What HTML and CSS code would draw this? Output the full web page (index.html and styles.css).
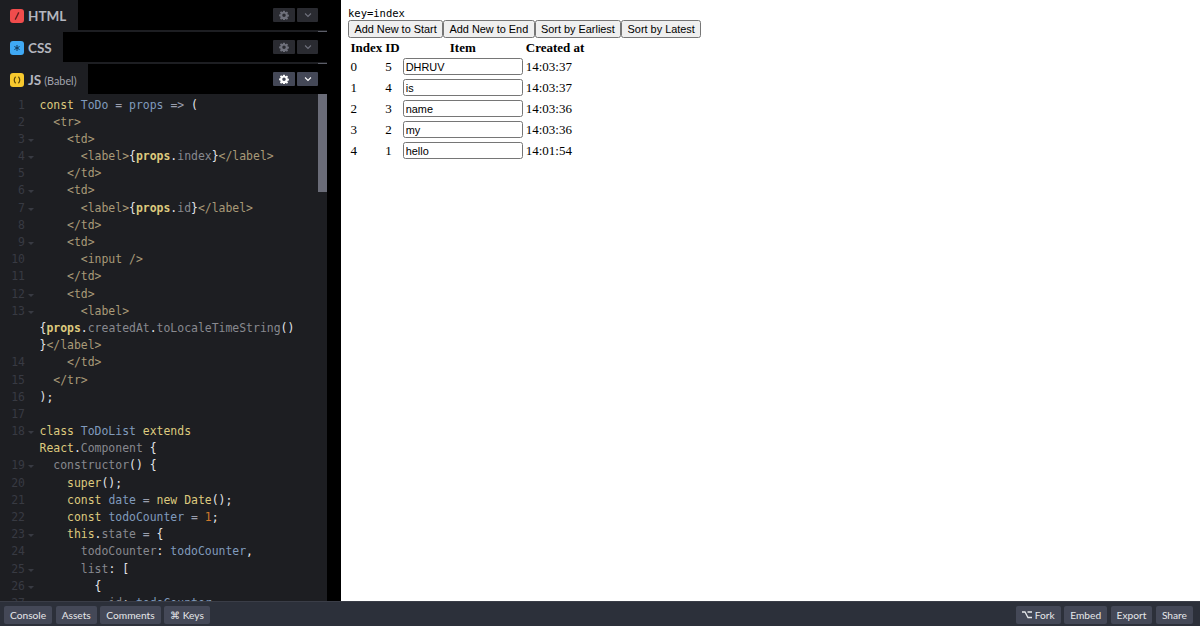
FILE: index.html
```html
<!DOCTYPE html>
<html lang="en">
<head>
<meta charset="utf-8">
<title>key=index</title>
<link rel="stylesheet" href="styles.css">
</head>
<body>
<div class="app">
  <main class="main">
    <section class="editors">
      <header class="bar">
        <div class="tab">
          <svg class="logo" viewBox="0 0 14 14"><rect width="14" height="14" rx="3" fill="#f04c4c"/><path d="M8.800 3.400 5.200 10.600" stroke="#5c1d1d" stroke-width="1.300"/></svg>
          <span>HTML</span>
        </div>
        <div class="tools dim">
          <button class="tool gear"><svg viewBox="0 0 12 12"><use href="#gear"/></svg></button>
          <button class="tool chev"><svg viewBox="0 0 12 12"><path d="M2.500 4.200 6 7.600l3.500-3.400" fill="none" stroke="currentColor" stroke-width="1.400"/></svg></button>
        </div>
      </header>
      <header class="bar">
        <div class="tab">
          <svg class="logo" viewBox="0 0 14 14"><rect width="14" height="14" rx="3" fill="#3fa9f5"/><path d="M7 4v6M4.400 5.500l5.200 3M9.600 5.500l-5.200 3" stroke="#123a5c" stroke-width="1"/></svg>
          <span>CSS</span>
        </div>
        <div class="tools dim">
          <button class="tool gear"><svg viewBox="0 0 12 12"><use href="#gear"/></svg></button>
          <button class="tool chev"><svg viewBox="0 0 12 12"><path d="M2.500 4.200 6 7.600l3.500-3.4" fill="none" stroke="currentColor" stroke-width="1.400"/></svg></button>
        </div>
      </header>
      <header class="bar last">
        <div class="tab">
          <svg class="logo" viewBox="0 0 14 14"><rect width="14" height="14" rx="3" fill="#f7c92e"/><path d="M5.600 3.800C3.800 5.500 3.800 8.500 5.600 10.200M8.400 3.800c1.800 1.700 1.800 4.700 0 6.400" fill="none" stroke="#5b4708" stroke-width="1.200"/></svg>
          <span>JS</span><small>(Babel)</small>
        </div>
        <div class="tools">
          <button class="tool gear"><svg viewBox="0 0 12 12"><use href="#gear"/></svg></button>
          <button class="tool chev"><svg viewBox="0 0 12 12"><path d="M2.500 4.200 6 7.600l3.500-3.4" fill="none" stroke="currentColor" stroke-width="1.400"/></svg></button>
        </div>
      </header>
      <div class="code">
        <div class="lines">
          <div class="ln"><i>1</i><b></b><code><s class="k">const</s> <s class="v">ToDo</s> <s class="o">=</s> <s class="v">props</s> <s class="o">=&gt;</s> <s class="p">(</s></code></div>
          <div class="ln"><i>2</i><b></b><code>  <s class="t">&lt;tr&gt;</s></code></div>
          <div class="ln"><i>3</i><b class="f"></b><code>    <s class="t">&lt;td&gt;</s></code></div>
          <div class="ln"><i>4</i><b class="f"></b><code>      <s class="t">&lt;label&gt;</s><s class="w">{</s><s class="k">props</s><s class="w">.</s><s class="n">index</s><s class="w">}</s><s class="t">&lt;/label&gt;</s></code></div>
          <div class="ln"><i>5</i><b></b><code>    <s class="t">&lt;/td&gt;</s></code></div>
          <div class="ln"><i>6</i><b class="f"></b><code>    <s class="t">&lt;td&gt;</s></code></div>
          <div class="ln"><i>7</i><b class="f"></b><code>      <s class="t">&lt;label&gt;</s><s class="w">{</s><s class="k">props</s><s class="w">.</s><s class="n">id</s><s class="w">}</s><s class="t">&lt;/label&gt;</s></code></div>
          <div class="ln"><i>8</i><b></b><code>    <s class="t">&lt;/td&gt;</s></code></div>
          <div class="ln"><i>9</i><b class="f"></b><code>    <s class="t">&lt;td&gt;</s></code></div>
          <div class="ln"><i>10</i><b></b><code>      <s class="t">&lt;input /&gt;</s></code></div>
          <div class="ln"><i>11</i><b></b><code>    <s class="t">&lt;/td&gt;</s></code></div>
          <div class="ln"><i>12</i><b class="f"></b><code>    <s class="t">&lt;td&gt;</s></code></div>
          <div class="ln"><i>13</i><b class="f"></b><code>      <s class="t">&lt;label&gt;</s></code></div>
          <div class="ln"><i></i><b></b><code><s class="w">{</s><s class="k">props</s><s class="w">.</s><s class="n">createdAt</s><s class="w">.</s><s class="n">toLocaleTimeString</s><s class="w">()</s></code></div>
          <div class="ln"><i></i><b></b><code><s class="w">}</s><s class="t">&lt;/label&gt;</s></code></div>
          <div class="ln"><i>14</i><b></b><code>    <s class="t">&lt;/td&gt;</s></code></div>
          <div class="ln"><i>15</i><b></b><code>  <s class="t">&lt;/tr&gt;</s></code></div>
          <div class="ln"><i>16</i><b></b><code><s class="w">);</s></code></div>
          <div class="ln"><i>17</i><b></b><code></code></div>
          <div class="ln"><i>18</i><b class="f"></b><code><s class="k">class</s> <s class="v">ToDoList</s> <s class="k">extends</s></code></div>
          <div class="ln"><i></i><b></b><code><s class="k">React</s><s class="w">.</s><s class="n">Component</s> <s class="w">{</s></code></div>
          <div class="ln"><i>19</i><b class="f"></b><code>  <s class="n">constructor</s><s class="w">()</s> <s class="w">{</s></code></div>
          <div class="ln"><i>20</i><b></b><code>    <s class="k">super</s><s class="w">();</s></code></div>
          <div class="ln"><i>21</i><b></b><code>    <s class="k">const</s> <s class="v">date</s> <s class="o">=</s> <s class="k">new</s> <s class="k">Date</s><s class="w">();</s></code></div>
          <div class="ln"><i>22</i><b></b><code>    <s class="k">const</s> <s class="v">todoCounter</s> <s class="o">=</s> <s class="d">1</s><s class="w">;</s></code></div>
          <div class="ln"><i>23</i><b class="f"></b><code>    <s class="k">this</s><s class="w">.</s><s class="n">state</s> <s class="o">=</s> <s class="w">{</s></code></div>
          <div class="ln"><i>24</i><b></b><code>      <s class="n">todoCounter</s><s class="w">:</s> <s class="v">todoCounter</s><s class="w">,</s></code></div>
          <div class="ln"><i>25</i><b class="f"></b><code>      <s class="n">list</s><s class="w">:</s> <s class="w">[</s></code></div>
          <div class="ln"><i>26</i><b class="f"></b><code>        <s class="w">{</s></code></div>
          <div class="ln"><i>27</i><b></b><code>          <s class="n">id</s><s class="w">:</s> <s class="v">todoCounter</s><s class="w">,</s></code></div>
        </div>
        <div class="thumb"></div>
      </div>
    </section>
    <div class="divider"></div>
    <section class="preview">
      <code class="key">key=index</code>
      <div class="actions">
        <button class="btn">Add New to Start</button><button class="btn">Add New to End</button><button class="btn">Sort by Earliest</button><button class="btn">Sort by Latest</button>
      </div>
      <table class="list">
        <thead><tr><th>Index</th><th>ID</th><th>Item</th><th>Created at</th></tr></thead>
        <tbody>
          <tr><td>0</td><td>5</td><td><input class="field" value="DHRUV"></td><td>14:03:37</td></tr>
          <tr><td>1</td><td>4</td><td><input class="field" value="is"></td><td>14:03:37</td></tr>
          <tr><td>2</td><td>3</td><td><input class="field" value="name"></td><td>14:03:36</td></tr>
          <tr><td>3</td><td>2</td><td><input class="field" value="my"></td><td>14:03:36</td></tr>
          <tr><td>4</td><td>1</td><td><input class="field" value="hello"></td><td>14:01:54</td></tr>
        </tbody>
      </table>
    </section>
  </main>
  <footer class="foot">
    <nav class="group">
      <button class="fbtn">Console</button>
      <button class="fbtn">Assets</button>
      <button class="fbtn">Comments</button>
      <button class="fbtn">⌘ Keys</button>
    </nav>
    <nav class="group">
      <button class="fbtn"><svg class="fork" viewBox="0 0 10 8"><path d="M0 1h3l3 5.500h4M5.500 1H10" fill="none" stroke="currentColor" stroke-width="1.300"/></svg>Fork</button>
      <button class="fbtn">Embed</button>
      <button class="fbtn">Export</button>
      <button class="fbtn">Share</button>
    </nav>
  </footer>
</div>
<svg class="defs" aria-hidden="true"><defs><path id="gear" fill="currentColor" fill-rule="evenodd" d="M5 .8h2l.3 1.500.9.400 1.300-.9 1.400 1.400-.9 1.300.4.900 1.500.3v2l-1.500.3-.4.900.9 1.300-1.400 1.400-1.300-.9-.9.400-.3 1.500H5l-.3-1.500-.9-.4-1.300.9L1.100 10l.9-1.300-.4-.9L.1 7.500v-2l1.500-.3.4-.9-.9-1.300L2.500 1.600l1.300.9.900-.4zM6 4.200a2.100 2.100 0 1 0 0 4.200 2.100 2.100 0 0 0 0-4.200z"/></defs></svg>
</body>
</html>
```
FILE: styles.css
```css
* { box-sizing: border-box; }
html, body { margin: 0; height: 100%; overflow: hidden; background: #000; }
.app { display: flex; flex-direction: column; height: 626px; }
.main { display: flex; height: 601px; }
.editors { width: 327px; display: flex; flex-direction: column; background: #000; }
.divider { width: 14px; background: #000; }
.bar { position: relative; height: 32px; display: flex; justify-content: space-between; align-items: flex-start; border-bottom: 2px solid #1d1e22; flex: none; }
.bar.last { height: 30px; border-bottom: 0; }
.bar:not(:first-child)::after { content: ""; position: absolute; right: 0; top: -1px; width: 9px; height: 1px; background: #5c5e68; }
.tab { height: 30px; padding: 2.500px 11.500px 0 10px; display: flex; align-items: center; gap: 4px; background: #1d1e22; color: #b4b6bf; font: 700 13.500px "Lato", sans-serif; }
.logo { width: 14px; height: 14px; flex: none; }
.tab small { font-size: 10.800px; font-weight: 400; color: #a2a4ae; margin-left: -1px; }
.tools { display: flex; gap: 2px; margin: 8px 9px 0 0; color: #6f717c; }
.tools:not(.dim) { color: #fff; }
.tool { height: 13.500px; padding: 0; border: 0; border-radius: 1px; background: #2a2b31; color: inherit; display: flex; align-items: center; justify-content: center; }
.tools:not(.dim) .tool { background: #444857; }
.gear { width: 22px; }
.chev { width: 21px; }
.tool svg { width: 10px; height: 10px; }
.code { flex: 1; min-height: 0; background: #1d1e22; display: flex; overflow: hidden; }
.lines { flex: 1; min-width: 0; padding-top: 2.500px; }
.ln { display: flex; height: 17.200px; line-height: 17.200px; font-family: "DejaVu Sans Mono", monospace; font-size: 11.450px; }
.ln i { width: 25px; flex: none; text-align: right; font-style: normal; color: #383a42; }
.ln b { width: 14.500px; flex: none; position: relative; font-weight: 400; }
.ln b.f::after { content: ""; position: absolute; left: 3px; top: 8px; border: 3px solid transparent; border-top: 3px solid #383a42; border-bottom: 0; }
.ln code { font: inherit; white-space: pre; color: #d5d7de; }
.ln s { text-decoration: none; }
.k { color: #ddca7e; }
.v { color: #809bbd; }
.o { color: #9a9fae; }
.p, .w { color: #e4e5ea; }
.w + .k { font-weight: 700; }
.t { color: #a99a78; }
.n { color: #88898f; }
.d { color: #d0782a; }
.thumb { width: 9px; height: 98px; flex: none; background: #6a6c78; }
.preview { flex: 1; background: #fff; padding: 7px 7px; color: #000; font: 13px/15px "Liberation Serif", serif; }
.key { display: block; font: 10.500px/12px "DejaVu Sans Mono", monospace; height: 13px; }
.actions { display: flex; }
.btn { height: 18px; padding: 0 5.400px; margin: 0; font: 10.900px "Liberation Sans", sans-serif; color: #000; background: #efefef; border: 1px solid #767676; border-radius: 2.500px; }
.list { border-spacing: 2px; }
.list th { padding: 0 .5px; font-weight: 700; text-align: center; }
.list td { padding: 1px .5px; }
.field { display: block; width: 120px; height: 17px; padding: 0 2px; font: 10.900px "Liberation Sans", sans-serif; color: #000; background: #fff; border: 1px solid #767676; border-radius: 2.500px; }
.foot { height: 25px; flex: none; display: flex; justify-content: space-between; align-items: center; padding: 1px 7px 0 4px; background: #2c303a; border-top: 1px solid #3a3d47; }
.group { display: flex; gap: 3.500px; }
.fbtn { height: 18px; padding: 0 6px; border: 0; border-radius: 2px; background: #444857; color: #e6e7ea; font: 400 10.200px "Lato", sans-serif; display: flex; align-items: center; gap: 3px; }
.fork { width: 10px; height: 8px; }
.defs { position: absolute; width: 0; height: 0; }
```
